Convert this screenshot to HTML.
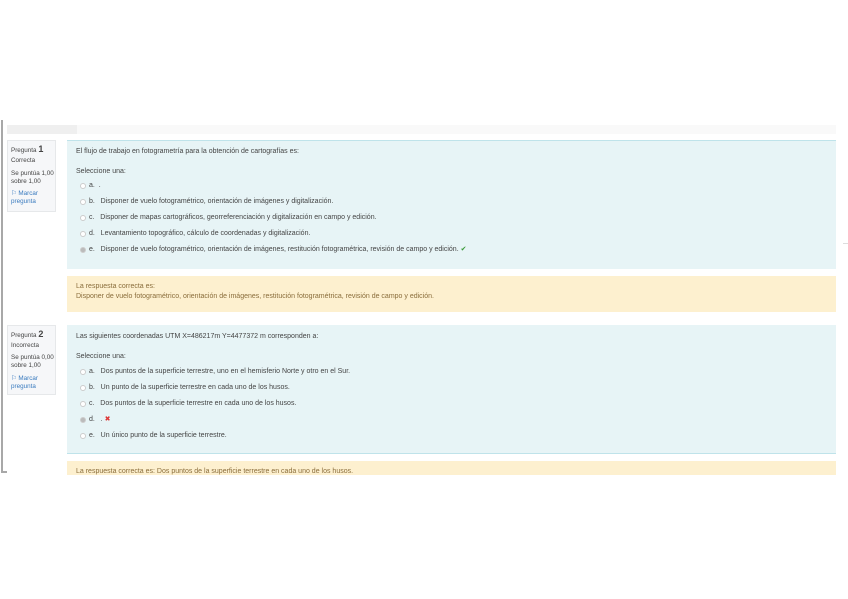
<!DOCTYPE html>
<html><head><meta charset="utf-8"><style>
body{margin:0;width:848px;height:599px;background:#fff;position:relative;overflow:hidden;font-family:"Liberation Sans",sans-serif;color:#444}
div{position:absolute;box-sizing:border-box}
.t{font-size:7px;white-space:nowrap;line-height:8px}
.s{font-size:6.3px}
.info{background:#f6f7f9;border:1px solid #e6e8ea;left:7px;width:49px;color:#444}
.q{background:#e7f4f6;left:67px;width:769px}
.y{background:#fdf0cf;left:67px;width:769px;color:#8a6d3b}
.r{width:6px;height:6px;border:1px solid #ccc;border-radius:50%;background:#fff}
</style></head><body>
<div style="left:1px;top:120px;width:2px;height:353px;background:#a8a8a8"></div>
<div style="left:1px;top:471px;width:6px;height:2px;background:#a8a8a8"></div>
<div style="left:7px;top:125px;width:829px;height:9px;background:#f9f9f9"></div>
<div style="left:7px;top:125px;width:70px;height:9px;background:#efefef"></div>

<div class="info" style="top:140px;height:72px"></div>
<div class="t s" style="left:11px;top:145px">Pregunta <b style="font-size:9px">1</b></div>
<div class="t s" style="left:11px;top:157px">Correcta</div>
<div class="t s" style="left:11px;top:170px">Se puntúa 1,00<br>sobre 1,00</div>
<div class="t s" style="left:11px;top:190px;color:#3a7bbf">⚐ Marcar<br>pregunta</div>

<div class="q" style="top:140px;height:129px;border-top:1px solid #bfe3ea"></div>
<div class="t" style="left:76px;top:148px">El flujo de trabajo en fotogrametría para la obtención de cartografías es:</div>
<div class="t" style="left:76px;top:168px">Seleccione una:</div>
<div class="r" style="left:80px;top:183px"></div><div class="t" style="left:89px;top:182px">a. &nbsp;.</div>
<div class="r" style="left:80px;top:199px"></div><div class="t" style="left:89px;top:198px">b. &nbsp;&nbsp;Disponer de vuelo fotogramétrico, orientación de imágenes y digitalización.</div>
<div class="r" style="left:80px;top:215px"></div><div class="t" style="left:89px;top:214px">c. &nbsp;&nbsp;Disponer de mapas cartográficos, georreferenciación y digitalización en campo y edición.</div>
<div class="r" style="left:80px;top:231px"></div><div class="t" style="left:89px;top:230px">d. &nbsp;&nbsp;Levantamiento topográfico, cálculo de coordenadas y digitalización.</div>
<div class="r" style="left:80px;top:247px;background:#bbb"></div><div class="t" style="left:89px;top:246px">e. &nbsp;&nbsp;Disponer de vuelo fotogramétrico, orientación de imágenes, restitución fotogramétrica, revisión de campo y edición. <span style="color:#3a9a3a">✔</span></div>

<div class="y" style="top:276px;height:36px"></div>
<div class="t" style="left:76px;top:283px;color:#8a6d3b">La respuesta correcta es:</div>
<div class="t" style="left:76px;top:293px;color:#8a6d3b">Disponer de vuelo fotogramétrico, orientación de imágenes, restitución fotogramétrica, revisión de campo y edición.</div>

<div class="info" style="top:325px;height:70px"></div>
<div class="t s" style="left:11px;top:330px">Pregunta <b style="font-size:9px">2</b></div>
<div class="t s" style="left:11px;top:342px">Incorrecta</div>
<div class="t s" style="left:11px;top:354px">Se puntúa 0,00<br>sobre 1,00</div>
<div class="t s" style="left:11px;top:375px;color:#3a7bbf">⚐ Marcar<br>pregunta</div>

<div class="q" style="top:325px;height:129px;border-bottom:1px solid #bfe3ea"></div>
<div class="t" style="left:76px;top:333px">Las siguientes coordenadas UTM X=486217m Y=4477372 m corresponden a:</div>
<div class="t" style="left:76px;top:353px">Seleccione una:</div>
<div class="r" style="left:80px;top:369px"></div><div class="t" style="left:89px;top:368px">a. &nbsp;&nbsp;Dos puntos de la superficie terrestre, uno en el hemisferio Norte y otro en el Sur.</div>
<div class="r" style="left:80px;top:385px"></div><div class="t" style="left:89px;top:384px">b. &nbsp;&nbsp;Un punto de la superficie terrestre en cada uno de los husos.</div>
<div class="r" style="left:80px;top:401px"></div><div class="t" style="left:89px;top:400px">c. &nbsp;&nbsp;Dos puntos de la superficie terrestre en cada uno de los husos.</div>
<div class="r" style="left:80px;top:417px;background:#bbb"></div><div class="t" style="left:89px;top:416px">d. &nbsp;&nbsp;. <span style="color:#d33">✖</span></div>
<div class="r" style="left:80px;top:433px"></div><div class="t" style="left:89px;top:432px">e. &nbsp;&nbsp;Un único punto de la superficie terrestre.</div>

<div class="y" style="top:461px;height:14px"></div>
<div class="t" style="left:76px;top:468px;color:#8a6d3b">La respuesta correcta es: Dos puntos de la superficie terrestre en cada uno de los husos.</div>
<div style="left:0;top:475px;width:848px;height:124px;background:#fff"></div>
<div style="left:843px;top:243px;width:5px;height:1px;background:#ddd"></div>
</body></html>
